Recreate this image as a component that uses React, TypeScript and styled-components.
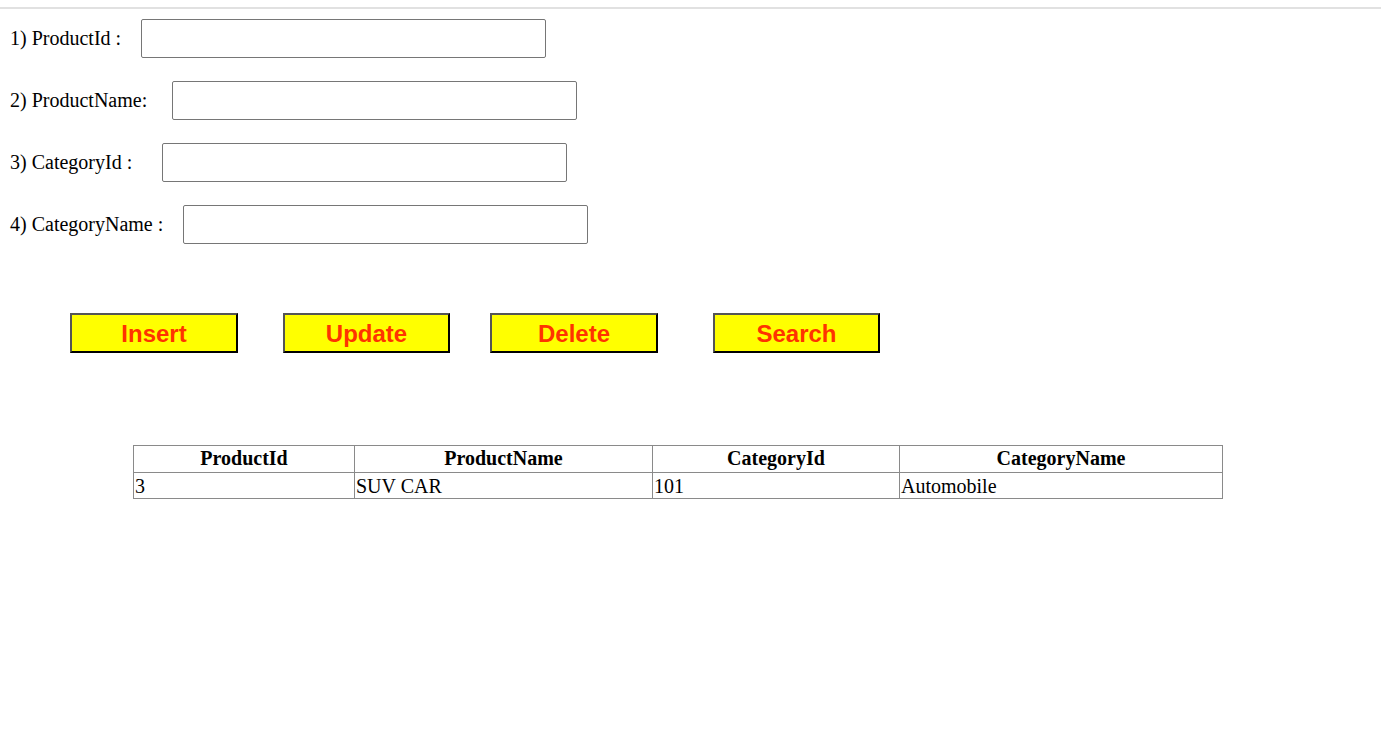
import React from "react";
import styled, { createGlobalStyle } from "styled-components";

const GlobalStyle = createGlobalStyle`
  html, body { margin: 0; padding: 0; background: #ffffff; }
  body { font-family: "Liberation Serif", "Times New Roman", serif; font-size: 20px; color: #000; }
`;

const Page = styled.div`
  padding-top: 7px;
`;

const TopRule = styled.div`
  height: 2px;
  background: #e1e1e1;
`;

const Form = styled.div`
  display: flex;
  flex-direction: column;
  gap: 23px;
  padding: 10px 0 0 10px;
`;

const Row = styled.div<{ $gap: number }>`
  display: flex;
  align-items: center;
  gap: ${(p) => p.$gap}px;
  height: 39px;
`;

const Label = styled.label`
  font-size: 20px;
  line-height: 23px;
  white-space: nowrap;
`;

const Input = styled.input`
  box-sizing: border-box;
  width: 405px;
  height: 39px;
  border: 1px solid #767676;
  border-radius: 2px;
  padding: 1px 2px;
  font-size: 20px;
  font-family: "Liberation Sans", Arial, sans-serif;
  background: #fff;
  margin: 0;
`;

const ButtonBar = styled.div`
  display: flex;
  padding: 69px 0 0 70px;
`;

const Btn = styled.button<{ $ml: number; $w: number }>`
  box-sizing: border-box;
  margin-left: ${(p) => p.$ml}px;
  width: ${(p) => p.$w}px;
  height: 40px;
  background: #ffff00;
  color: #ff3300;
  font-family: "Liberation Sans", Arial, sans-serif;
  font-weight: bold;
  font-size: 24px;
  border-style: solid;
  border-width: 2px;
  border-color: #555555 #000000 #000000 #555555;
  padding: 1px 0 0;
  line-height: 35px;
  cursor: pointer;
`;

const TableWrap = styled.div`
  padding: 92px 0 0 133px;
`;

const Table = styled.table`
  border-collapse: collapse;
  table-layout: fixed;
  width: 1089px;
  font-family: "Liberation Serif", "Times New Roman", serif;
  font-size: 20px;
`;

const Th = styled.th`
  border: 1px solid #8a8a8a;
  padding: 1px 1px 2px;
  height: 23px;
  line-height: 23px;
  font-weight: bold;
  text-align: center;
`;

const Td = styled.td`
  border: 1px solid #8a8a8a;
  padding: 2px 1px 0;
  height: 23px;
  line-height: 23px;
  text-align: left;
`;

const fields = [
  { label: "1) ProductId :", gap: 20 },
  { label: "2) ProductName:", gap: 25 },
  { label: "3) CategoryId :", gap: 30 },
  { label: "4) CategoryName :", gap: 20 },
];

const buttons = [
  { text: "Insert", ml: 0, w: 168 },
  { text: "Update", ml: 45, w: 167 },
  { text: "Delete", ml: 40, w: 168 },
  { text: "Search", ml: 55, w: 167 },
];

const columns = [
  { name: "ProductId", w: 221 },
  { name: "ProductName", w: 298 },
  { name: "CategoryId", w: 247 },
  { name: "CategoryName", w: 323 },
];

const rows = [["3", "SUV CAR", "101", "Automobile"]];

export default function App() {
  return (
    <>
      <GlobalStyle />
      <Page>
        <TopRule />
        <Form>
          {fields.map((f) => (
            <Row key={f.label} $gap={f.gap}>
              <Label>{f.label}</Label>
              <Input type="text" />
            </Row>
          ))}
        </Form>
        <ButtonBar>
          {buttons.map((b) => (
            <Btn key={b.text} $ml={b.ml} $w={b.w}>
              {b.text}
            </Btn>
          ))}
        </ButtonBar>
        <TableWrap>
          <Table>
            <colgroup>
              {columns.map((c) => (
                <col key={c.name} style={{ width: c.w }} />
              ))}
            </colgroup>
            <thead>
              <tr>
                {columns.map((c) => (
                  <Th key={c.name}>{c.name}</Th>
                ))}
              </tr>
            </thead>
            <tbody>
              {rows.map((r, i) => (
                <tr key={i}>
                  {r.map((v, j) => (
                    <Td key={j}>{v}</Td>
                  ))}
                </tr>
              ))}
            </tbody>
          </Table>
        </TableWrap>
      </Page>
    </>
  );
}
